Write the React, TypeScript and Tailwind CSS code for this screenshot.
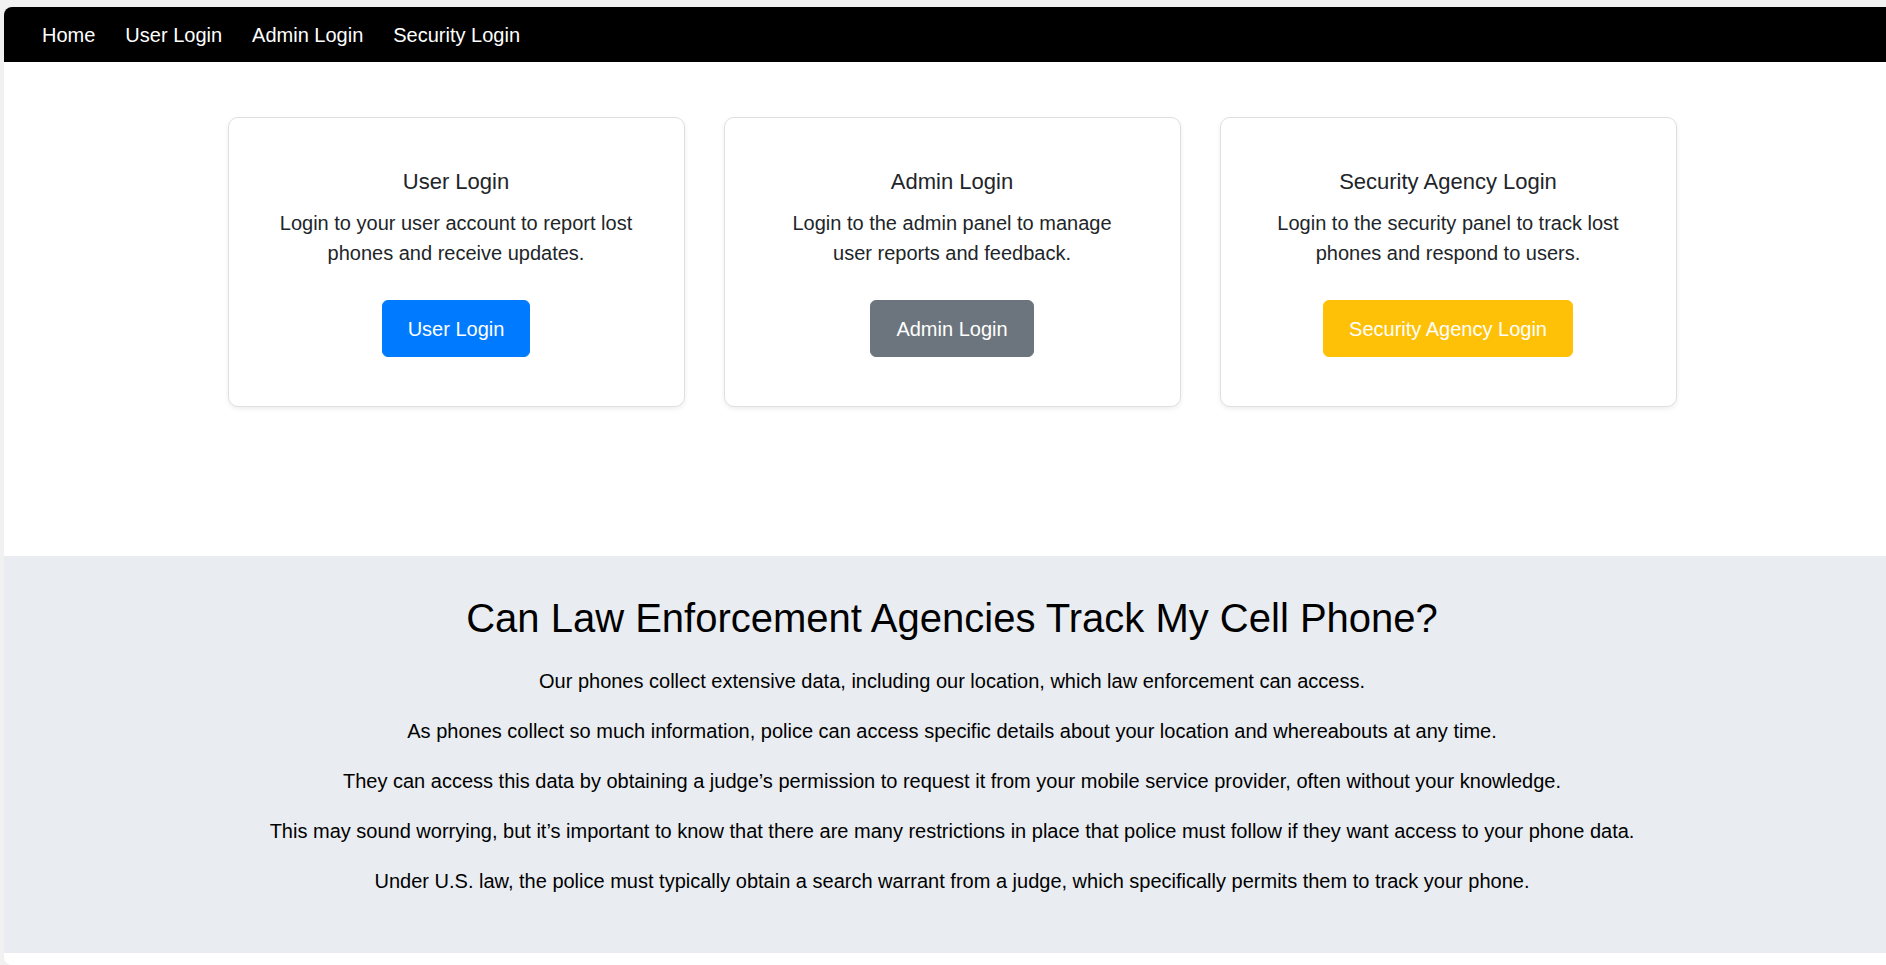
const navLinks = ["Home", "User Login", "Admin Login", "Security Login"];

const loginCards = [
  {
    title: "User Login",
    text: "Login to your user account to report lost phones and receive updates.",
    button: "User Login",
    color: "bg-[#007bff] border-[#007bff]",
  },
  {
    title: "Admin Login",
    text: "Login to the admin panel to manage user reports and feedback.",
    button: "Admin Login",
    color: "bg-[#6c757d] border-[#6c757d]",
  },
  {
    title: "Security Agency Login",
    text: "Login to the security panel to track lost phones and respond to users.",
    button: "Security Agency Login",
    color: "bg-[#ffc107] border-[#ffc107]",
  },
];

const facts = [
  "Our phones collect extensive data, including our location, which law enforcement can access.",
  "As phones collect so much information, police can access specific details about your location and whereabouts at any time.",
  "They can access this data by obtaining a judge’s permission to request it from your mobile service provider, often without your knowledge.",
  "This may sound worrying, but it’s important to know that there are many restrictions in place that police must follow if they want access to your phone data.",
  "Under U.S. law, the police must typically obtain a search warrant from a judge, which specifically permits them to track your phone.",
];

export default function App() {
  return (
    <div className="h-[965px] w-full overflow-hidden bg-[#f1f1f1] pt-[7px] font-['Liberation_Sans',Arial,sans-serif]">
      <div className="ml-[4px] flex h-[958px] w-[1896px] flex-col overflow-hidden rounded-l-[8px] bg-white">
        {/* navbar */}
        <nav className="flex h-[55px] shrink-0 items-center gap-[30px] bg-black pl-[38px] text-[20px] text-white">
          {navLinks.map((link) => (
            <a key={link} href="#" className="leading-[30px]">
              {link}
            </a>
          ))}
        </nav>

        {/* login cards */}
        <main className="flex justify-center gap-[39px] pt-[55px]">
          {loginCards.map((card) => (
            <div
              key={card.title}
              className="flex w-[457px] flex-col items-center rounded-[10px] border border-[#dfdfdf] bg-white px-[48px] pt-[51px] pb-[49px] text-center text-[#212529] shadow-[0_2px_5px_rgba(0,0,0,0.07)]"
            >
              <h5 className="mb-[13px] text-[22px] leading-[26px]">{card.title}</h5>
              <p className="text-[20px] leading-[30px]">{card.text}</p>
              <button
                className={`mt-[32px] rounded-[6px] border px-[25px] py-[12.5px] text-[20px] leading-[30px] text-white ${card.color}`}
              >
                {card.button}
              </button>
            </div>
          ))}
        </main>

        {/* info section */}
        <section className="mt-[149px] bg-[#e9edf1] pt-[38px] pb-[37px] text-center text-black">
          <h2 className="mb-[24px] text-[40px] leading-[48px]">
            Can Law Enforcement Agencies Track My Cell Phone?
          </h2>
          {facts.map((fact) => (
            <p key={fact} className="mb-[20px] text-[20px] leading-[30px]">
              {fact}
            </p>
          ))}
        </section>
      </div>
    </div>
  );
}
